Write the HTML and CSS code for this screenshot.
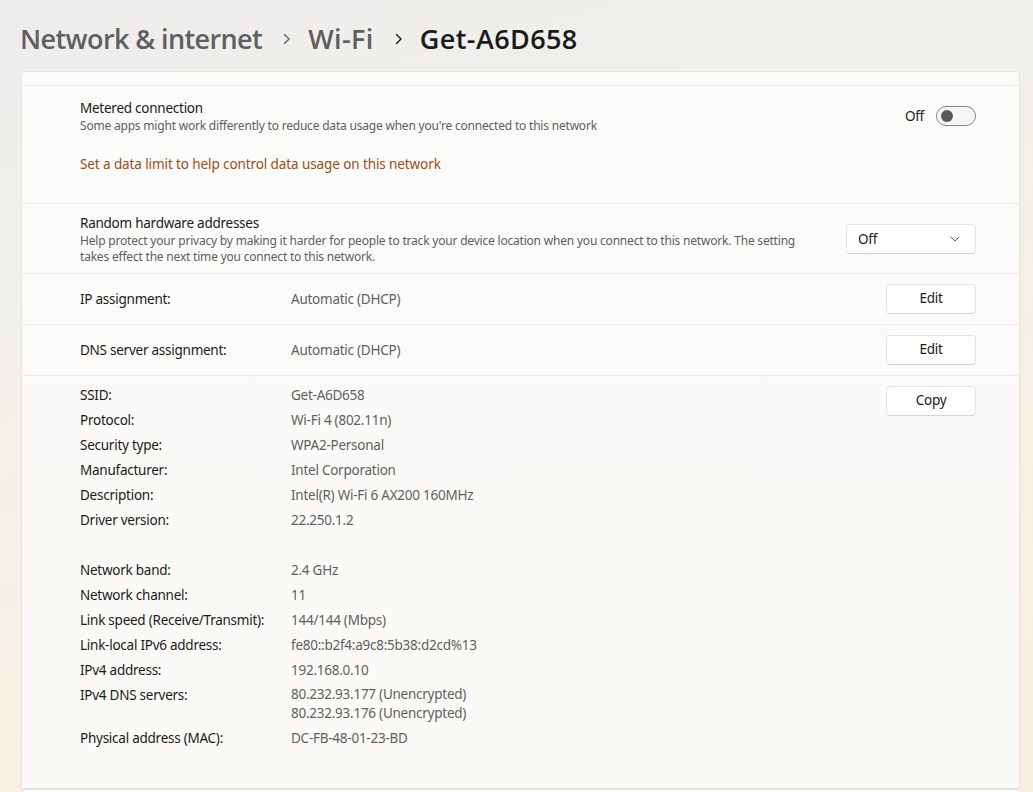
FILE: index.html
```html
<!DOCTYPE html>
<html lang="en">
<head>
<meta charset="utf-8">
<title>Get-A6D658</title>
<link rel="stylesheet" href="styles.css">
</head>
<body>
<div class="page">
  <h1 class="crumbs">
    <span class="crumb first">Network &amp; internet</span>
    <svg class="sep" width="9" height="12" viewBox="0 0 9 12"><path d="M2.5 1.5 L7 6 L2.5 10.5" fill="none" stroke="#5f5f5f" stroke-width="1.4" stroke-linecap="round" stroke-linejoin="round"/></svg>
    <span class="crumb">Wi-Fi</span>
    <svg class="sep" width="9" height="12" viewBox="0 0 9 12"><path d="M2.5 1.5 L7 6 L2.5 10.5" fill="none" stroke="#1a1a1a" stroke-width="1.4" stroke-linecap="round" stroke-linejoin="round"/></svg>
    <span class="crumb current">Get-A6D658</span>
  </h1>

  <div class="card">
    <div class="section stub"></div>

    <div class="section metered">
      <div class="setting-head">
        <div class="setting-text">
          <div class="label">Metered connection</div>
          <div class="desc">Some apps might work differently to reduce data usage when you're connected to this network</div>
        </div>
        <div class="toggle-wrap">
          <span class="toggle-state">Off</span>
          <span class="toggle"><span class="knob"></span></span>
        </div>
      </div>
      <a class="link" href="#">Set a data limit to help control data usage on this network</a>
    </div>

    <div class="section random">
      <div class="setting-text wide">
        <div class="label">Random hardware addresses</div>
        <div class="desc">Help protect your privacy by making it harder for people to track your device location when you connect to this network. The setting takes effect the next time you connect to this network.</div>
      </div>
      <div class="dropdown">
        <span>Off</span>
        <svg width="10" height="6" viewBox="0 0 10 6"><path d="M1 1 L5 5 L9 1" fill="none" stroke="#5f5f5f" stroke-width="1" stroke-linecap="round" stroke-linejoin="round"/></svg>
      </div>
    </div>

    <div class="section assign">
      <div class="kv">
        <span class="key">IP assignment:</span>
        <span class="val">Automatic (DHCP)</span>
      </div>
      <button class="btn">Edit</button>
    </div>

    <div class="section assign">
      <div class="kv">
        <span class="key">DNS server assignment:</span>
        <span class="val">Automatic (DHCP)</span>
      </div>
      <button class="btn">Edit</button>
    </div>

    <div class="section props">
      <div class="prop-list">
        <span class="key">SSID:</span><span class="val">Get-A6D658</span>
        <span class="key">Protocol:</span><span class="val">Wi-Fi 4 (802.11n)</span>
        <span class="key">Security type:</span><span class="val">WPA2-Personal</span>
        <span class="key">Manufacturer:</span><span class="val">Intel Corporation</span>
        <span class="key">Description:</span><span class="val">Intel(R) Wi-Fi 6 AX200 160MHz</span>
        <span class="key">Driver version:</span><span class="val">22.250.1.2</span>
        <span class="spacer"></span><span class="spacer"></span>
        <span class="key">Network band:</span><span class="val">2.4 GHz</span>
        <span class="key">Network channel:</span><span class="val">11</span>
        <span class="key">Link speed (Receive/Transmit):</span><span class="val">144/144 (Mbps)</span>
        <span class="key">Link-local IPv6 address:</span><span class="val">fe80::b2f4:a9c8:5b38:d2cd%13</span>
        <span class="key">IPv4 address:</span><span class="val">192.168.0.10</span>
        <span class="key">IPv4 DNS servers:</span><span class="val multi">80.232.93.177 (Unencrypted)<br>80.232.93.176 (Unencrypted)</span>
        <span class="key">Physical address (MAC):</span><span class="val">DC-FB-48-01-23-BD</span>
      </div>
      <button class="btn copy">Copy</button>
    </div>
  </div>

  <div class="card next"></div>
</div>
</body>
</html>
```

FILE: styles.css
```css
html, body {
  margin: 0;
  padding: 0;
  height: 100%;
}

body {
  font-family: "Segoe UI", "Noto Sans", "Open Sans", sans-serif;
  color: #1a1a1a;
  background: linear-gradient(165deg, #eeedeb 0%, #f2f0ec 30%, #f6f0e5 65%, #f7efe0 100%);
  overflow: hidden;
}

.page {
  padding: 19px 13px 0 21px;
}

.crumbs {
  margin: 0 0 12px -1px;
  display: flex;
  align-items: center;
  height: 40px;
  font-family: "Open Sans", "Noto Sans", sans-serif;
  font-size: 27px;
  line-height: 40px;
  font-weight: 600;
  letter-spacing: 0.4px;
  color: #5f5f5f;
}

.crumb.first {
  letter-spacing: -0.6px;
}

.crumb.current {
  color: #1a1a1a;
}

.sep {
  margin: 0 17px 0 20px;
  flex: none;
}

.card {
  background: linear-gradient(180deg, #fbfbfa 0%, #fcfaf6 100%);
  border: 1px solid #e6e3de;
  border-radius: 4px 4px 0 0;
}

.section {
  border-bottom: 1px solid #ede9e3;
  padding: 0 43px 0 58px;
}

.section:last-child {
  border-bottom: none;
}

.stub {
  height: 13px;
}

.metered {
  padding-top: 12px;
  padding-bottom: 29px;
}

.setting-head {
  display: flex;
  align-items: center;
  justify-content: space-between;
}

.label {
  font-size: 13.5px;
  line-height: 20px;
  color: #1a1a1a;
  letter-spacing: -0.25px;
}

.desc {
  font-size: 12px;
  line-height: 16px;
  color: #5e5e5e;
  letter-spacing: -0.2px;
}

.link {
  display: block;
  margin-top: 20px;
  font-size: 13.5px;
  line-height: 20px;
  color: #9d4e15;
  text-decoration: none;
  letter-spacing: -0.1px;
}

.toggle-wrap {
  display: flex;
  align-items: center;
  gap: 12px;
  font-size: 13.5px;
}

.toggle-state {
  color: #1a1a1a;
  letter-spacing: -0.25px;
}

.toggle {
  display: flex;
  align-items: center;
  box-sizing: border-box;
  width: 40px;
  height: 20px;
  border: 1px solid #858585;
  border-radius: 10px;
  background: #f6f6f6;
  padding-left: 4px;
}

.knob {
  width: 12px;
  height: 12px;
  border-radius: 50%;
  background: #5a5a5a;
}

.random {
  display: flex;
  align-items: center;
  justify-content: space-between;
  padding-top: 9px;
  padding-bottom: 8px;
}

.setting-text.wide {
  max-width: 725px;
}

.dropdown {
  box-sizing: border-box;
  width: 130px;
  height: 30px;
  flex: none;
  display: flex;
  align-items: center;
  justify-content: space-between;
  padding: 0 15px 0 11px;
  background: #fefefe;
  border: 1px solid #e5e5e5;
  border-bottom-color: #d4d4d4;
  border-radius: 4px;
  font-size: 13.5px;
  letter-spacing: -0.25px;
}

.assign {
  display: flex;
  align-items: center;
  justify-content: space-between;
  height: 50px;
}

.kv {
  display: flex;
  font-size: 13.5px;
  line-height: 20px;
  letter-spacing: -0.25px;
}

.kv .key {
  width: 211px;
}

.key {
  color: #1a1a1a;
}

.val {
  color: #5f5f5f;
}

.btn {
  box-sizing: border-box;
  width: 90px;
  height: 30px;
  flex: none;
  background: #fefefe;
  border: 1px solid #e5e5e5;
  border-bottom-color: #d2d2d2;
  border-radius: 4px;
  font-family: inherit;
  font-size: 13.5px;
  letter-spacing: -0.25px;
  color: #1a1a1a;
  padding: 0 0 2px;
}

.props {
  display: flex;
  align-items: flex-start;
  justify-content: space-between;
  padding-bottom: 40px;
}

.prop-list {
  display: grid;
  grid-template-columns: 211px auto;
  row-gap: 5px;
  padding-top: 9px;
  font-size: 13.5px;
  line-height: 20px;
  letter-spacing: -0.25px;
}

.val.multi {
  line-height: 19px;
}

.spacer {
  height: 20px;
}

.btn.copy {
  margin-top: 10px;
}

.card.next {
  margin-top: 0;
  height: 40px;
  border-radius: 4px 4px 0 0;
}
```
